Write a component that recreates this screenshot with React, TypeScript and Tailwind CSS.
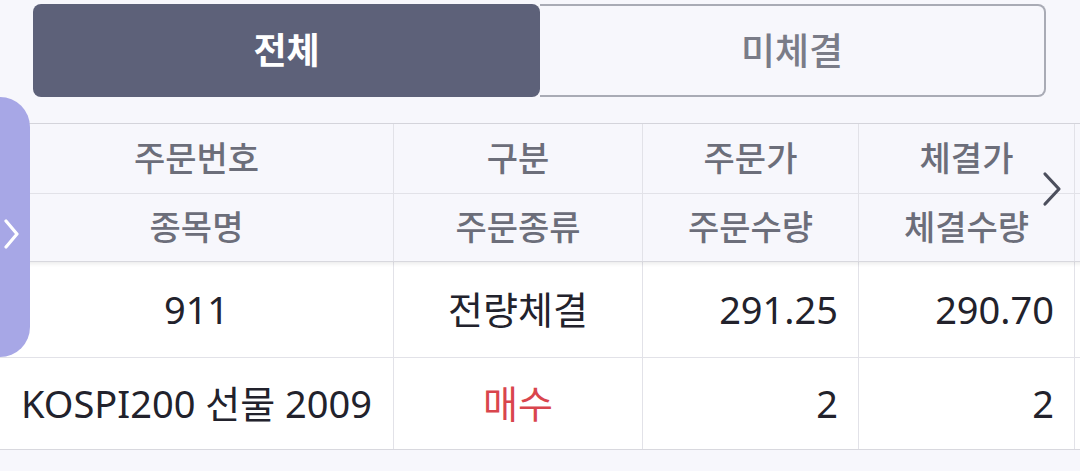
import React from "react";

const font = { fontFamily: '"Noto Sans", "Noto Sans CJK KR", sans-serif' };

const cols = "grid grid-cols-[394px_249px_216px_216px_220px]";

function HCell({ children }: { children?: React.ReactNode }) {
  return (
    <div className="flex items-center justify-center border-r border-[#e2e2e8] text-[34px] font-medium text-[#6c6e7a]">
      {children}
    </div>
  );
}

function BCell({
  children,
  right,
  red,
}: {
  children?: React.ReactNode;
  right?: boolean;
  red?: boolean;
}) {
  return (
    <div
      className={
        "flex items-center border-r border-[#e2e2e8] text-[38px] " +
        (right ? "justify-end pr-[20px] " : "justify-center ") +
        (red ? "text-[#d9454d]" : "text-[#22222c]")
      }
    >
      {children}
    </div>
  );
}

export default function App() {
  return (
    <div
      className="relative w-[1080px] h-[471px] overflow-hidden bg-[#f7f7fc]"
      style={font}
    >
      {/* Tabs */}
      <div className="ml-[33px] mt-[4px] flex h-[93px] w-[1013px]">
        <div className="flex w-[507px] items-center justify-center rounded-[8px] bg-[#5d6179] text-[36px] font-bold text-white">
          전체
        </div>
        <div className="flex flex-1 items-center justify-center rounded-r-[8px] border-2 border-l-0 border-[#a9abb5] text-[37px] font-medium text-[#7a7c88]">
          미체결
        </div>
      </div>

      {/* Table */}
      <div className="mt-[26px] w-[1300px] border-t border-[#d6d6dd]">
        <div className="relative z-10 bg-[#f7f7fc] shadow-[0_2px_4px_rgba(0,0,0,0.08)]">
          <div className={cols + " h-[70px] border-b border-[#e2e2e8]"}>
            <HCell>주문번호</HCell>
            <HCell>구분</HCell>
            <HCell>주문가</HCell>
            <HCell>체결가</HCell>
            <HCell />
          </div>
          <div className={cols + " h-[68px] border-b border-[#d8d8de]"}>
            <HCell>종목명</HCell>
            <HCell>주문종류</HCell>
            <HCell>주문수량</HCell>
            <HCell>체결수량</HCell>
            <HCell />
          </div>
        </div>
        <div className="bg-white">
          <div className={cols + " h-[96px] border-b border-[#e2e2e8]"}>
            <BCell>911</BCell>
            <BCell>전량체결</BCell>
            <BCell right>291.25</BCell>
            <BCell right>290.70</BCell>
            <BCell />
          </div>
          <div className={cols + " h-[92px] border-b border-[#d8d8de]"}>
            <BCell>KOSPI200 선물 2009</BCell>
            <BCell red>매수</BCell>
            <BCell right>2</BCell>
            <BCell right>2</BCell>
            <BCell />
          </div>
        </div>
      </div>

      {/* Right scroll chevron */}
      <svg
        className="absolute left-[1040px] top-[171px] z-20"
        width="24"
        height="36"
        viewBox="0 0 24 36"
        fill="none"
      >
        <path
          d="M5 3 L19 18 L5 33"
          stroke="#4c4f5d"
          strokeWidth="3.2"
          strokeLinecap="round"
          strokeLinejoin="round"
        />
      </svg>

      {/* Left handle */}
      <div className="absolute left-0 top-[97px] z-20 flex h-[260px] w-[30px] items-center rounded-r-[30px] bg-[#a7a7e6]">
        <svg
          className="ml-[2px] mt-[14px]"
          width="18"
          height="30"
          viewBox="0 0 18 30"
          fill="none"
        >
          <path
            d="M4 2 L15 15 L4 28"
            stroke="#ffffff"
            strokeWidth="3.2"
            strokeLinecap="round"
            strokeLinejoin="round"
          />
        </svg>
      </div>
    </div>
  );
}
